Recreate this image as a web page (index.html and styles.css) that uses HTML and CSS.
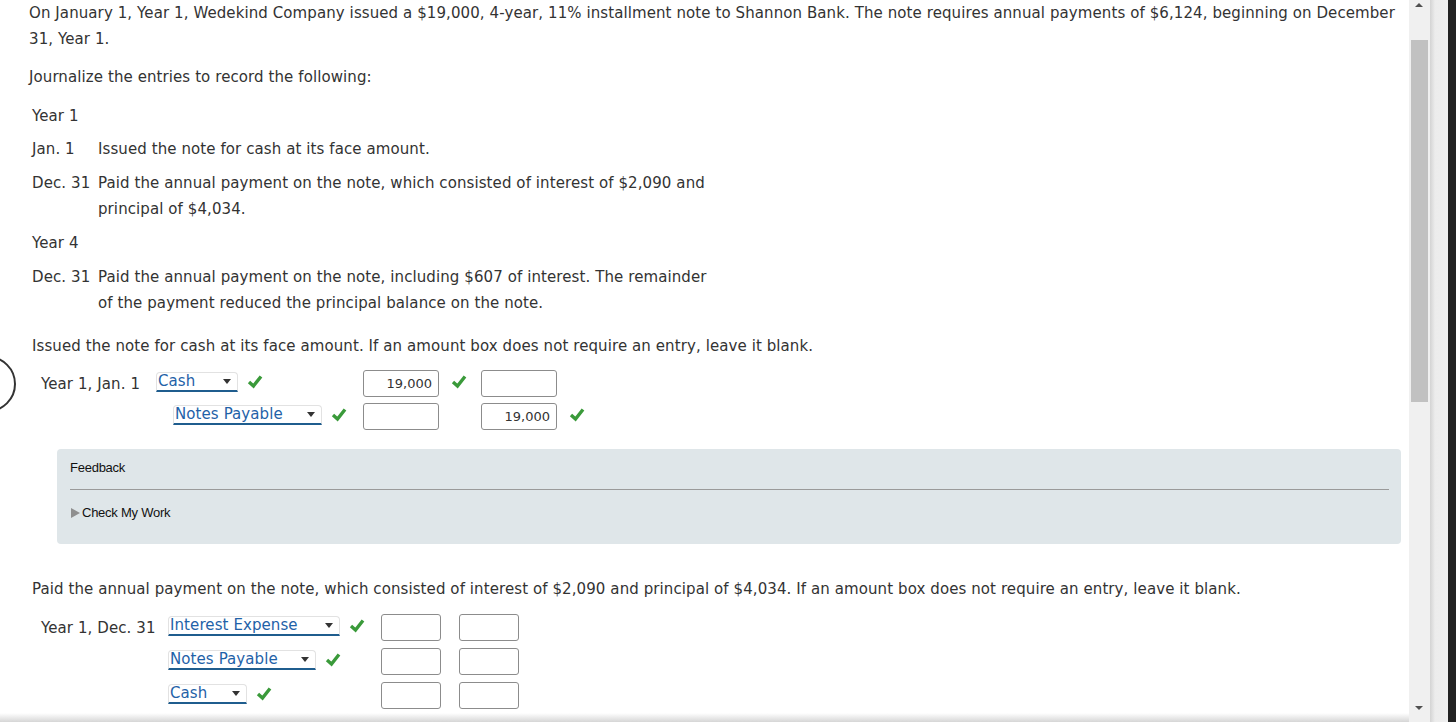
FILE: index.html
```html
<!DOCTYPE html>
<html lang="en">
<head>
  <meta charset="UTF-8" />
  <title>Installment Note</title>
  <link rel="stylesheet" href="styles.css">
</head>
<body>
  <div class="page">
    <div class="marker"></div>

    <div class="content">
      <p class="intro">On January 1, Year 1, Wedekind Company issued a $19,000, 4-year, 11% installment note to Shannon Bank. The note requires annual payments of $6,124, beginning on December 31, Year 1.</p>

      <p class="lead">Journalize the entries to record the following:</p>

      <div class="events">
        <div class="year">Year 1</div>
        <div class="event">
          <span class="date">Jan. 1</span>
          <span class="desc">Issued the note for cash at its face amount.</span>
        </div>
        <div class="event">
          <span class="date">Dec. 31</span>
          <span class="desc">Paid the annual payment on the note, which consisted of interest of $2,090 and<br>principal of $4,034.</span>
        </div>
        <div class="year year-four">Year 4</div>
        <div class="event">
          <span class="date">Dec. 31</span>
          <span class="desc">Paid the annual payment on the note, including $607 of interest. The remainder<br>of the payment reduced the principal balance on the note.</span>
        </div>
      </div>

      <p class="prompt">Issued the note for cash at its face amount. If an amount box does not require an entry, leave it blank.</p>

      <div class="entry entry-wide">
        <div class="line">
          <span class="label">Year 1, Jan. 1</span>
          <span class="account">
            <span class="select select-cash">Cash<i class="caret"></i></span>
            <svg class="check" viewBox="0 0 16 16"><path d="M2 8 L6.5 12 L14 2.5" /></svg>
          </span>
          <span class="amount">
            <span class="box">19,000</span>
            <svg class="check" viewBox="0 0 16 16"><path d="M2 8 L6.5 12 L14 2.5" /></svg>
          </span>
          <span class="amount">
            <span class="box"></span>
          </span>
        </div>
        <div class="line">
          <span class="label"></span>
          <span class="account credit">
            <span class="select select-notes">Notes Payable<i class="caret"></i></span>
            <svg class="check" viewBox="0 0 16 16"><path d="M2 8 L6.5 12 L14 2.5" /></svg>
          </span>
          <span class="amount">
            <span class="box"></span>
          </span>
          <span class="amount">
            <span class="box">19,000</span>
            <svg class="check" viewBox="0 0 16 16"><path d="M2 8 L6.5 12 L14 2.5" /></svg>
          </span>
        </div>
      </div>

      <div class="feedback">
        <div class="feedback-title">Feedback</div>
        <div class="feedback-toggle"><i class="arrow"></i>Check My Work</div>
      </div>

      <p class="prompt prompt-two">Paid the annual payment on the note, which consisted of interest of $2,090 and principal of $4,034. If an amount box does not require an entry, leave it blank.</p>

      <div class="entry entry-narrow">
        <div class="line">
          <span class="label">Year 1, Dec. 31</span>
          <span class="account">
            <span class="select select-interest">Interest Expense<i class="caret"></i></span>
            <svg class="check" viewBox="0 0 16 16"><path d="M2 8 L6.5 12 L14 2.5" /></svg>
          </span>
          <span class="amount"><span class="box"></span></span>
          <span class="amount"><span class="box"></span></span>
        </div>
        <div class="line">
          <span class="label"></span>
          <span class="account">
            <span class="select select-notes2">Notes Payable<i class="caret"></i></span>
            <svg class="check" viewBox="0 0 16 16"><path d="M2 8 L6.5 12 L14 2.5" /></svg>
          </span>
          <span class="amount"><span class="box"></span></span>
          <span class="amount"><span class="box"></span></span>
        </div>
        <div class="line">
          <span class="label"></span>
          <span class="account">
            <span class="select select-cash2">Cash<i class="caret"></i></span>
            <svg class="check" viewBox="0 0 16 16"><path d="M2 8 L6.5 12 L14 2.5" /></svg>
          </span>
          <span class="amount"><span class="box"></span></span>
          <span class="amount"><span class="box"></span></span>
        </div>
      </div>
    </div>

    <div class="bottom-fade"></div>
  </div>

  <div class="scrollbar">
    <i class="scroll-up"></i>
    <div class="thumb"></div>
    <i class="scroll-down"></i>
  </div>
  <div class="edge"></div>
</body>
</html>
```

FILE: styles.css
```css
html, body {
  margin: 0;
  height: 722px;
  overflow: hidden;
}

body {
  display: flex;
  font-family: "DejaVu Sans", Verdana, sans-serif;
  font-size: 15px;
  letter-spacing: 0.09px;
  color: #333;
  background-color: #fff;
}

.page {
  position: relative;
  width: 1409px;
  flex-shrink: 0;
  overflow: hidden;
}

.content {
  padding: 0 14px 0 29px;
}

p {
  margin: 0;
  line-height: 26px;
}

.intro {
  margin-top: 0;
}

.lead {
  margin-top: 12px;
}

.events {
  margin-top: 13px;
  padding-left: 3px;
  line-height: 26px;
}

.year {
  margin-bottom: 7px;
}

.year-four {
  margin-bottom: 8px;
}

.event {
  display: flex;
  margin-bottom: 8px;
}

.date {
  width: 66px;
  flex-shrink: 0;
}

.prompt {
  margin-top: 17px;
  padding-left: 3px;
}

/* journal entry rows */
.entry {
  padding-left: 12px;
}

.line {
  display: grid;
  align-items: center;
}

.entry-wide {
  margin-top: 11px;
}

.entry-wide .line {
  grid-template-columns: 115px 207px 118px 118px;
  height: 26px;
  margin-bottom: 7px;
}

.entry-narrow {
  margin-top: 12px;
}

.entry-narrow .line {
  grid-template-columns: 127px 213px 78px 78px;
  height: 27px;
  margin-bottom: 7px;
}

.label {
  white-space: nowrap;
}

.account, .amount {
  display: flex;
  align-items: center;
}

.credit {
  padding-left: 17px;
}

.select {
  position: relative;
  box-sizing: border-box;
  height: 20px;
  line-height: 17px;
  padding-left: 1px;
  color: #1f62a8;
  background-color: #fff;
  border: 1px solid #e2e2e2;
  border-bottom: 2px solid #1f5d8e;
  border-radius: 4px 4px 0 0;
  margin-top: -3px;
}

.select-cash { width: 82px; }
.select-notes { width: 149px; }
.select-interest { width: 172px; }
.select-notes2 { width: 148px; }
.select-cash2 { width: 79px; }

.caret {
  position: absolute;
  right: 6px;
  top: 6px;
  border-left: 4px solid transparent;
  border-right: 4px solid transparent;
  border-top: 5px solid #333;
}

.check {
  width: 16px;
  height: 16px;
  margin-top: -3px;
  fill: none;
  stroke: #3a9a3a;
  stroke-width: 3.4;
}

.account .check {
  margin-left: 9px;
}

.amount .check {
  margin-left: 12px;
}

.box {
  box-sizing: border-box;
  width: 76px;
  height: 27px;
  border: 1px solid #8c8c8c;
  border-radius: 3px;
  text-align: right;
  padding-right: 6px;
  font-size: 13px;
  line-height: 25px;
  letter-spacing: 0;
  color: #333;
}

.entry-narrow .box {
  width: 60px;
}

/* feedback panel */
.feedback {
  margin: 20px 0 0 28px;
  width: 1344px;
  box-sizing: border-box;
  padding: 10px 12px 0 13px;
  height: 95px;
  background-color: #dfe6e9;
  border-radius: 4px;
  font-family: "Liberation Sans", Arial, sans-serif;
  font-size: 13px;
  letter-spacing: -0.25px;
  color: #111;
}

.feedback-title {
  line-height: 18px;
  padding-bottom: 12px;
  border-bottom: 1px solid #9a9a9a;
}

.feedback-toggle {
  margin-top: 14px;
  line-height: 18px;
  display: flex;
  align-items: center;
}

.arrow {
  border-top: 5px solid transparent;
  border-bottom: 5px solid transparent;
  border-left: 9px solid #8f8f8f;
  margin: 0 2px 0 1px;
}

.prompt-two {
  margin-top: 32px;
}

/* decorations */
.marker {
  position: absolute;
  left: -40px;
  top: 356px;
  width: 52px;
  height: 52px;
  border: 2px solid #333;
  border-radius: 50%;
}

.bottom-fade {
  position: absolute;
  left: 0;
  right: 0;
  bottom: 0;
  height: 9px;
  background: linear-gradient(#fff, #d6d6d6);
}

.scrollbar {
  position: relative;
  width: 21px;
  flex-shrink: 0;
  background-color: #f0f0f0;
}

.thumb {
  position: absolute;
  left: 2px;
  top: 40px;
  width: 17px;
  height: 362px;
  background-color: #c1c1c1;
}

.scroll-up, .scroll-down {
  position: absolute;
  left: 6px;
  border-left: 4px solid transparent;
  border-right: 4px solid transparent;
}

.scroll-up {
  top: 3px;
  border-bottom: 4px solid #505050;
}

.scroll-down {
  bottom: 12px;
  border-top: 4px solid #505050;
}

.edge {
  flex: 1;
  background: linear-gradient(90deg, #d3d3d3 0, #ececec 5px, #efefef 18px, #222 18px);
}
```
